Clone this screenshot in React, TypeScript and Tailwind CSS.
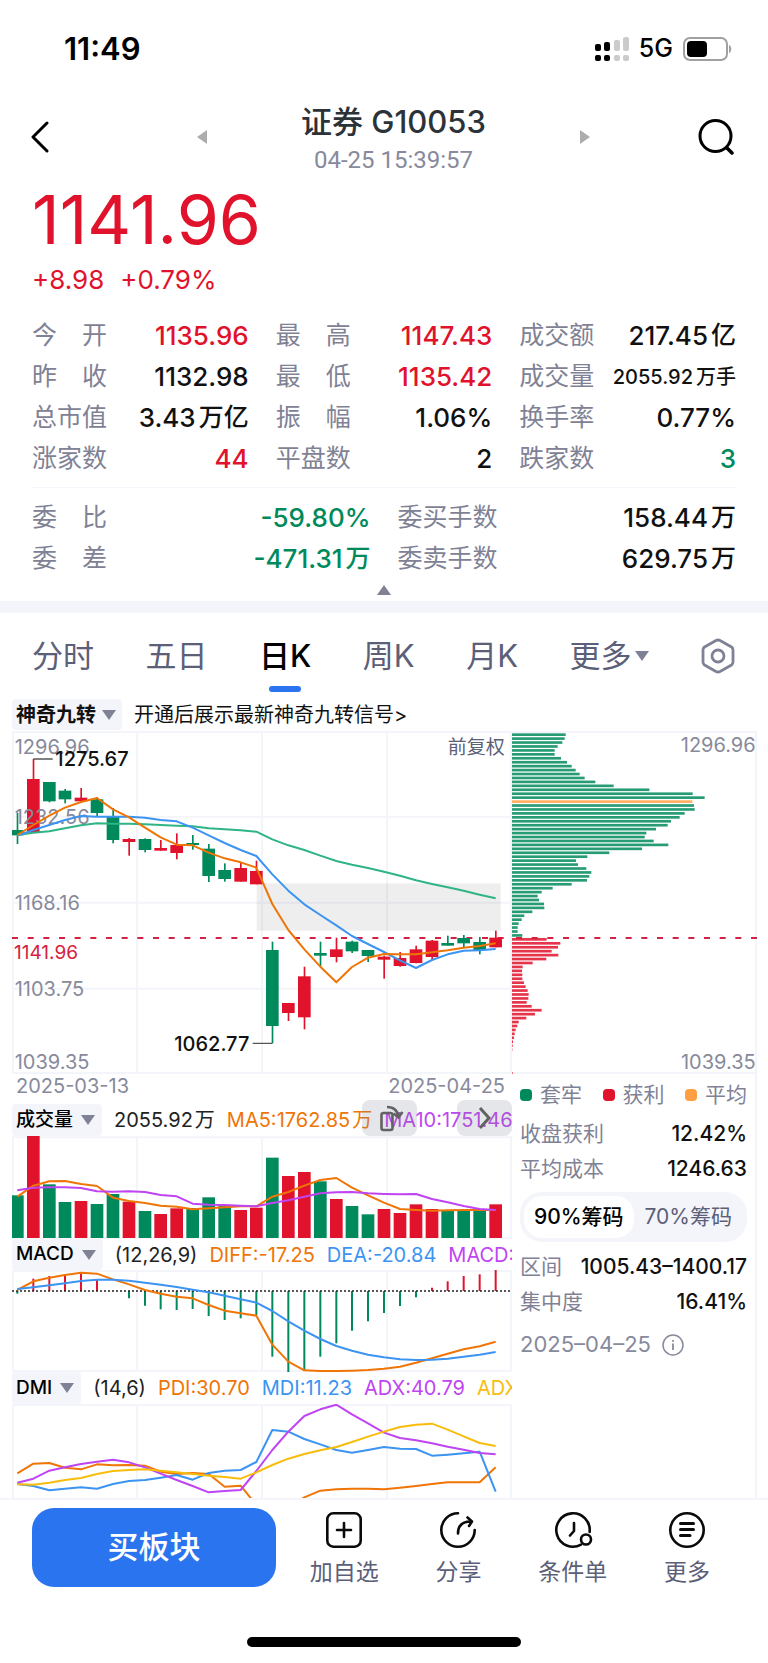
import type { ReactNode } from "react";
import { clsx } from "clsx";

const UP = "#e0122c";
const DOWN = "#008a5c";
const ORANGE = "#ef7506";
const BLUE = "#3c94f2";
const PURPLE = "#bf44f2";
const YELLOW = "#f8bd0c";
const GRID = "#f4f5fa";
const AXIS = "#878a9b";

// high, body top, body bottom, low, direction
const candles: [number, number, number, number, "u" | "d"][] = [
    [248, 300, 316, 342, "d"], [87, 147, 308, 308, "u"], [156, 156, 214, 217, "d"], [177, 182, 208, 220, "d"],
    [174, 203, 214, 216, "u"], [202, 208, 249, 258, "d"], [234, 260, 330, 340, "d"], [324, 327, 336, 377, "u"],
    [325, 327, 360, 367, "d"], [330, 354, 362, 362, "u"], [310, 345, 369, 388, "u"], [315, 339, 345, 359, "d"],
    [342, 356, 438, 456, "d"], [400, 420, 447, 455, "d"], [398, 414, 455, 455, "u"], [392, 423, 463, 463, "u"],
    [635, 660, 888, 940, "d"], [819, 819, 849, 873, "u"], [710, 739, 862, 898, "u"], [635, 669, 677, 710, "d"],
    [623, 658, 681, 697, "u"], [632, 635, 664, 669, "d"], [660, 660, 678, 696, "d"], [677, 680, 689, 746, "u"],
    [666, 684, 708, 710, "u"], [647, 658, 699, 700, "u"], [630, 632, 681, 690, "u"], [617, 639, 647, 647, "d"],
    [615, 624, 640, 651, "d"], [621, 636, 660, 673, "d"], [602, 623, 652, 652, "u"],
];

const priceMa5 = [315, 285, 257, 233, 216, 204, 238, 262, 293, 322, 344, 346, 368, 385, 397, 413, 522, 600, 658, 710, 757, 711, 683, 672, 673, 673, 667, 661, 653, 648, 640];
const priceMa10 = [317, 300, 285, 270, 258, 260, 260, 260, 263, 270, 274, 293, 316, 339, 360, 378, 433, 482, 523, 555, 586, 618, 642, 666, 691, 714, 690, 673, 662, 661, 657];
const priceMa20 = [315, 308, 304, 295, 286, 280, 281, 281, 283, 285, 287, 289, 295, 298, 301, 305, 328, 346, 360, 377, 393, 404, 414, 425, 437, 451, 462, 472, 482, 494, 505];

const volumeTops = [178, 0, 145, 198, 195, 204, 174, 197, 225, 234, 217, 216, 184, 209, 222, 215, 65, 120, 108, 136, 189, 210, 235, 219, 231, 205, 219, 225, 225, 225, 205];
const volumeMa5 = [182, 149, 136, 135, 144, 150, 185, 195, 201, 209, 212, 220, 217, 214, 211, 211, 182, 168, 149, 132, 126, 155, 178, 200, 219, 222, 224, 223, 222, 222, 222];
const volumeMa10 = [163, 155, 154, 154, 156, 166, 167, 166, 168, 177, 181, 203, 206, 207, 209, 211, 201, 193, 182, 172, 169, 168, 172, 174, 175, 174, 189, 199, 210, 219, 222];

const macdBars = [71, 26, 18, 13, 10, 30, 62, 85, 107, 118, 120, 117, 138, 150, 145, 135, 260, 306, 303, 260, 220, 182, 154, 129, 108, 82, 53, 34, 18, 13, 0];
const macdDiff = [60, 34, 23, 15, 8, 11, 28, 43, 60, 71, 80, 85, 105, 122, 130, 137, 224, 275, 301, 303, 303, 302, 300, 296, 290, 278, 265, 251, 238, 229, 215];
const macdDea = [57, 52, 46, 40, 33, 29, 29, 32, 38, 44, 51, 59, 67, 77, 88, 98, 123, 154, 182, 207, 228, 242, 254, 262, 268, 270, 269, 266, 260, 254, 246];

const dmiPdi = [208, 179, 177, 191, 196, 181, 184, 183, 185, 203, 210, 207, 210, 248, 245, 303, 350, 310, 280, 260, 256, 254, 254, 256, 251, 246, 240, 235, 235, 235, 190];
const dmiMdi = [240, 246, 259, 254, 250, 254, 240, 231, 228, 221, 213, 227, 207, 200, 198, 174, 78, 83, 105, 121, 138, 146, 138, 129, 134, 135, 155, 152, 148, 143, 263];
const dmiAdx = [236, 224, 200, 190, 180, 173, 167, 175, 190, 209, 228, 246, 265, 261, 258, 201, 138, 83, 36, 16, 2, 31, 58, 86, 102, 109, 118, 128, 137, 147, 151];
const dmiAdxr = [241, 242, 236, 228, 222, 210, 201, 198, 196, 200, 205, 210, 215, 219, 224, 205, 183, 164, 150, 139, 129, 114, 98, 83, 69, 62, 59, 77, 97, 117, 126];

const chipWidths = [
    161, 158, 151, 137, 128, 128, 147, 165, 179, 191, 203, 218, 250, 305, 412, 542, 578, 541, 546, 548, 518, 503, 477, 467, 432, 403, 398, 425,
    469, 390, 292, 226, 192, 198, 223, 238, 232, 225, 179, 122, 89, 77, 81, 96, 97, 61, 37, 29, 20, 17, 17, 31,
    104, 145, 138, 119, 139, 103, 62, 32, 30, 31, 31, 36, 41, 47, 50, 49, 44, 59, 89, 69, 43, 20, 16, 11, 8, 6, 3, 2, 1, 0, 0, 0, 0, 0, 2,
];
const AVERAGE_ROW = 17;
const FIRST_PROFIT_ROW = 52;

const stats = [
    { label: "今　开", value: "1135.96", tone: "text-[#e0122c]" },
    { label: "最　高", value: "1147.43", tone: "text-[#e0122c]" },
    { label: "成交额", value: "217.45", unit: "亿" },
    { label: "昨　收", value: "1132.98" },
    { label: "最　低", value: "1135.42", tone: "text-[#e0122c]" },
    { label: "成交量", value: "2055.92", unit: "万手", small: true },
    { label: "总市值", value: "3.43", unit: "万亿" },
    { label: "振　幅", value: "1.06%" },
    { label: "换手率", value: "0.77%" },
    { label: "涨家数", value: "44", tone: "text-[#e0122c]" },
    { label: "平盘数", value: "2" },
    { label: "跌家数", value: "3", tone: "text-[#008a5c]" },
];

const orders = [
    { label: "委　比", value: "-59.80%", tone: "text-[#008a5c]" },
    { label: "委买手数", value: "158.44", unit: "万" },
    { label: "委　差", value: "-471.31", unit: "万", tone: "text-[#008a5c]" },
    { label: "委卖手数", value: "629.75", unit: "万" },
];

const xAt = (i: number) => Math.round(16 + i * 47.83);

function Line({ points, color }: { points: number[]; color: string }) {
    return (
        <polyline
            points={points.map((y, i) => `${xAt(i)},${y}`).join(" ")}
            fill="none"
            stroke={color}
            strokeWidth="6"
            strokeLinejoin="round"
        />
    );
}

function Grid({ top, bottom, rows = [] }: { top: number; bottom: number; rows?: number[] }) {
    return (
        <g stroke={GRID} strokeWidth="6">
            {[3, 375, 750, 1125, 1497].map((x) => <path key={x} d={`M${x} ${top}V${bottom}`} />)}
            {[top, ...rows, bottom].map((y) => <path key={y} d={`M0 ${y}H1500`} />)}
        </g>
    );
}

function Triangle({ className, dir = "down" }: { className: string; dir?: "up" | "down" | "left" | "right" }) {
    const shapes = {
        up: "M7 0L14 10H0z",
        down: "M0 0H14L7 10z",
        left: "M14 0V10L0 5z",
        right: "M0 0L14 5L0 10z",
    };
    return (
        <svg viewBox="0 0 14 10" preserveAspectRatio="none" className={className} fill="currentColor" aria-hidden="true">
            <path d={shapes[dir]} />
        </svg>
    );
}

interface Stat {
    label: string;
    value: string;
    unit?: string;
    tone?: string;
    small?: boolean;
}

function StatRow({ label, value, unit, tone, small }: Stat) {
    return (
        <div className="flex h-[41px] items-center justify-between whitespace-nowrap">
            <dt className="text-[25px] text-[#7f8295]">{label}</dt>
            <dd className={clsx("flex items-center gap-[3px] font-medium", small ? "text-[20px]" : "text-[26px]", tone ?? "text-[#111]")}>
                <span>{value}</span>
                {unit && <span className={small ? "text-[20px]" : "text-[25px]"}>{unit}</span>}
            </dd>
        </div>
    );
}

function IndicatorHeader({ name, children, className }: { name: string; children: ReactNode; className: string }) {
    return (
        <div className={clsx("flex items-center overflow-hidden whitespace-nowrap", className)}>
            <button className="flex h-full shrink-0 items-center gap-2 rounded bg-[#f4f5fa] pr-[7px] pl-1 text-[19px] font-medium text-black">
                {name}
                <Triangle className="h-[10px] w-[14px] text-[#7f8295]" />
            </button>
            <div className="ml-3 flex gap-3 text-[20px]">{children}</div>
        </div>
    );
}

function PriceChart() {
    return (
        <svg viewBox="0 0 1500 1032" className="block w-full" fontSize="60" role="img" aria-label="日K">
            <Grid top={6} bottom={1029} rows={[260, 518, 776]} />
            <rect x="734" y="460" width="732" height="142" fill="#000" fillOpacity="0.065" />
            <path d="M0 624H1500" stroke="#d5213f" strokeWidth="6" strokeDasharray="18 29" />
            {candles.map(([high, top, bottom, low, dir], i) => (
                <g key={i} fill={dir === "u" ? UP : DOWN}>
                    <rect x={xAt(i) - 2} y={high} width="5" height={low - high} />
                    <rect x={xAt(i) - 19} y={top} width="38" height={bottom - top} />
                </g>
            ))}
            <g fill={AXIS}>
                <text x="8" y="71">1296.96</text>
                <text x="8" y="281">1232.56</text>
                <text x="8" y="540">1168.16</text>
                <text x="8" y="798">1103.75</text>
                <text x="8" y="1016">1039.35</text>
            </g>
            <text x="6" y="687" fill="#d5213f" fontSize="57">1141.96</text>
            <Line points={priceMa20} color="#2fb484" />
            <Line points={priceMa10} color={BLUE} />
            <Line points={priceMa5} color={ORANGE} />
            <path d="M64 87H122M722 940H781" stroke="#555" strokeWidth="4" />
            <g fill="#111" fontWeight="500">
                <text x="130" y="108">1275.67</text>
                <text x="712" y="962" textAnchor="end">1062.77</text>
            </g>
            <text x="1478" y="73" textAnchor="end" fill="#5b6078" fontSize="57">前复权</text>
        </svg>
    );
}

function VolumeChart() {
    return (
        <svg viewBox="0 0 1500 309" className="block w-full" role="img" aria-label="成交量">
            <Grid top={4} bottom={305} />
            {volumeTops.map((top, i) => (
                <rect key={i} x={xAt(i) - 19} y={top} width="38" height={306 - top} fill={candles[i][4] === "u" ? UP : DOWN} />
            ))}
            <Line points={volumeMa5} color={ORANGE} />
            <Line points={volumeMa10} color={PURPLE} />
        </svg>
    );
}

function MacdChart() {
    return (
        <svg viewBox="0 0 1500 306" className="block w-full" role="img" aria-label="MACD">
            <Grid top={3} bottom={303} />
            {macdBars.map((y, i) => (
                <path key={i} d={`M${xAt(i)} 63V${y}`} stroke={y > 63 ? DOWN : UP} strokeWidth="6" />
            ))}
            <path d="M0 63H1500" stroke="#222" strokeWidth="5" strokeDasharray="6 6" />
            <Line points={macdDiff} color={ORANGE} />
            <Line points={macdDea} color={BLUE} />
        </svg>
    );
}

function DmiChart() {
    return (
        <svg viewBox="0 0 1500 282" className="block w-full" role="img" aria-label="DMI">
            <Grid top={3} bottom={320} />
            <Line points={dmiPdi} color={ORANGE} />
            <Line points={dmiMdi} color={BLUE} />
            <Line points={dmiAdx} color={PURPLE} />
            <Line points={dmiAdxr} color={YELLOW} />
        </svg>
    );
}

function ChipChart() {
    return (
        <svg viewBox="0 0 735 1032" className="block w-full" fontSize="60" role="img" aria-label="筹码分布">
            <path d="M0 6H732V1029H0" fill="none" stroke={GRID} strokeWidth="6" />
            {chipWidths.map((w, i) => (
                <rect
                    key={i}
                    x="0"
                    y={10 + i * 11.81}
                    width={w}
                    height="8"
                    opacity="0.85"
                    fill={i === AVERAGE_ROW ? "#ff9f43" : i < FIRST_PROFIT_ROW ? DOWN : UP}
                />
            ))}
            <path d="M12 624H735" stroke="#d5213f" strokeWidth="6" strokeDasharray="18 29" />
            <g fill={AXIS} textAnchor="end">
                <text x="731" y="67">1296.96</text>
                <text x="731" y="1016">1039.35</text>
            </g>
        </svg>
    );
}

function ChipRow({ label, value }: { label: string; value: string }) {
    return (
        <div className="flex h-[35px] items-center justify-between whitespace-nowrap text-[21px]">
            <dt className="text-[#7f8295]">{label}</dt>
            <dd className="font-medium text-[#111]">{value}</dd>
        </div>
    );
}

function ChipPanel() {
    return (
        <div className="flex-1 border-r-2 border-[#f4f5fa] pr-2 pl-2">
            <ul className="flex h-[42px] items-center justify-between text-[21px] text-[#7f8295]">
                <li className="flex items-center gap-2"><i className="size-3 rounded bg-[#008a5c]" />套牢</li>
                <li className="flex items-center gap-2"><i className="size-3 rounded bg-[#e0122c]" />获利</li>
                <li className="flex items-center gap-2"><i className="size-3 rounded bg-[#ff9f43]" />平均</li>
            </ul>
            <dl>
                <ChipRow label="收盘获利" value="12.42%" />
                <ChipRow label="平均成本" value="1246.63" />
            </dl>
            <div className="mt-[6px] flex h-[50px] rounded-[22px] bg-[#f4f5fa] p-1 text-[21px] whitespace-nowrap">
                <button className="flex-1 rounded-[18px] bg-white font-medium text-black" aria-pressed="true">90%筹码</button>
                <button className="flex-1 text-[#5b6078]" aria-pressed="false">70%筹码</button>
            </div>
            <dl className="mt-[7px]">
                <ChipRow label="区间" value="1005.43–1400.17" />
                <ChipRow label="集中度" value="16.41%" />
            </dl>
            <div className="mt-2 flex h-[35px] items-center gap-[11px] text-[22px] text-[#878a9b]">
                <time>2025–04–25</time>
                <button aria-label="说明">
                    <svg viewBox="0 0 22 22" className="size-[22px]" fill="none" stroke="currentColor" strokeWidth="1.5">
                        <circle cx="11" cy="11" r="10" />
                        <path d="M11 9.5V16M11 6V7.8" strokeWidth="1.8" />
                    </svg>
                </button>
            </div>
        </div>
    );
}

function StatusBar() {
    return (
        <div className="flex h-[98px] items-center justify-between pr-9 pl-16 text-black">
            <span className="text-[31px] font-semibold">11:49</span>
            <div className="flex items-center gap-[10px]">
                <svg viewBox="0 0 34 24" className="h-6 w-[34px]" aria-hidden="true">
                    <rect x="0" y="7" width="6" height="7" rx="2" />
                    <rect x="9" y="5" width="6" height="9" rx="2" />
                    <rect x="0" y="18" width="6" height="6" rx="2" />
                    <rect x="9" y="18" width="6" height="6" rx="2" />
                    <g fill="#cbcbcb">
                        <rect x="19" y="3" width="6" height="11" rx="2" />
                        <rect x="28" y="0" width="6" height="14" rx="2" />
                        <rect x="19" y="18" width="6" height="6" rx="2" />
                        <rect x="28" y="18" width="6" height="6" rx="2" />
                    </g>
                </svg>
                <span className="text-[25px] font-medium">5G</span>
                <svg viewBox="0 0 49 24" className="h-6 w-[49px]" aria-hidden="true">
                    <rect x="1" y="1" width="43" height="22" rx="6" fill="none" stroke="#a0a0a0" strokeWidth="2" />
                    <rect x="4" y="4" width="20" height="16" rx="4" />
                    <path d="M46 8c3 1 3 7 0 8z" fill="#a0a0a0" />
                </svg>
            </div>
        </div>
    );
}

function NavIcon({ children }: { children: ReactNode }) {
    return (
        <svg viewBox="0 0 36 36" className="size-9 overflow-visible" fill="none" stroke="#0a0a0a" strokeWidth="2.6" strokeLinecap="round" strokeLinejoin="round" aria-hidden="true">
            {children}
        </svg>
    );
}

const actions = [
    {
        label: "加自选",
        icon: <><rect x="1.3" y="1.3" width="33.4" height="33.4" rx="6" /><path d="M18 11V25M11 18H25" /></>,
    },
    {
        label: "分享",
        icon: <><path d="M18 1.3A16.7 16.7 0 1 0 34.7 18" /><path d="M18 21.5C18 14 22 9.5 31 9.5M27.5 5.5L32 9.5L29 14" /></>,
    },
    {
        label: "条件单",
        icon: <><path d="M26 32.7A16.7 16.7 0 1 1 34.6 20" /><circle cx="31" cy="27.5" r="5" /><path d="M19 11V19L15 23.5" /></>,
    },
    {
        label: "更多",
        icon: <><circle cx="18" cy="18" r="16.7" /><path d="M11.5 11.5H24.5M11.5 17.5H24.5M11.5 23.5H21" strokeWidth="3" /></>,
    },
];

export default function App() {
    const tab = "flex h-full items-center text-[31px] text-[#5b6078]";

    return (
        <div className="flex min-h-screen w-full flex-col overflow-hidden bg-white font-['Inter','Noto_Sans_CJK_SC',sans-serif]">
            <StatusBar />

            <header className="flex h-[78px] items-center pr-[34px] pl-[31px]">
                <button aria-label="返回">
                    <svg viewBox="0 0 18 32" className="h-8 w-[18px]" fill="none" stroke="#000" strokeWidth="3" strokeLinecap="round" strokeLinejoin="round">
                        <path d="M16 2L2 16L16 30" />
                    </svg>
                </button>
                <div className="mr-[108px] ml-[148px] flex flex-1 items-center justify-between">
                    <button aria-label="上一个"><Triangle dir="left" className="h-[14px] w-[10px] text-[#adadad]" /></button>
                    <div className="pt-[6px] text-center">
                        <h1 className="text-[31px] leading-[40px] font-medium text-[#2b3238]">证券 G10053</h1>
                        <p className="font-['Roboto',sans-serif] text-[24px] leading-[36px] text-[#878a9b]">04-25 15:39:57</p>
                    </div>
                    <button aria-label="下一个"><Triangle dir="right" className="h-[14px] w-[10px] text-[#adadad]" /></button>
                </div>
                <button aria-label="搜索">
                    <svg viewBox="0 0 36 36" className="size-9" fill="none" stroke="#000" strokeWidth="3" strokeLinecap="round">
                        <circle cx="17.5" cy="17" r="15.5" />
                        <path d="M29 29L34 34" strokeWidth="3.5" />
                    </svg>
                </button>
            </header>

            <section className="px-8">
                <p className="h-[86px] text-[68px] leading-[86px] text-[#e0122c]">1141.96</p>
                <p className="flex gap-4 pb-[17px] text-[26px] leading-[36px] text-[#e0122c]">
                    <span>+8.98</span>
                    <span>+0.79%</span>
                </p>
                <dl className="grid grid-cols-3 gap-x-[27px] border-b border-[#f4f5fa] pb-2">
                    {stats.map((s) => <StatRow key={s.label} {...s} />)}
                </dl>
                <dl className="grid grid-cols-2 gap-x-[27px] pt-[9px]">
                    {orders.map((s) => <StatRow key={s.label} {...s} />)}
                </dl>
                <button className="mx-auto flex h-[22px] items-center" aria-label="收起">
                    <Triangle dir="up" className="h-[10px] w-[14px] text-[#7f8295]" />
                </button>
            </section>

            <div className="h-3 shrink-0 bg-[#f4f5fa]" />

            <nav className="flex h-[86px] items-center justify-between pr-[33px] pl-8">
                <button className={tab}>分时</button>
                <button className={tab}>五日</button>
                <button className="relative flex h-full items-center text-[31px] font-medium text-black" aria-current="page">
                    日K
                    <span className="absolute bottom-[7px] left-1/2 h-[6px] w-8 -translate-x-1/2 rounded-full bg-[#2b74f0]" />
                </button>
                <button className={tab}>周K</button>
                <button className={tab}>月K</button>
                <button className={clsx(tab, "gap-1")}>
                    更多
                    <Triangle className="h-[10px] w-[14px] text-[#7f8295]" />
                </button>
                <button aria-label="设置">
                    <svg viewBox="0 0 34 36" className="h-9 w-[34px]" fill="none" stroke="#7f8295" strokeWidth="2.8" strokeLinejoin="round">
                        <path d="M15 2.5Q17 1.5 19 2.5L30.5 9Q32 10 32 12V24Q32 26 30.5 27L19 33.5Q17 34.5 15 33.5L3.5 27Q2 26 2 24V12Q2 10 3.5 9Z" />
                        <circle cx="17" cy="18" r="6" />
                    </svg>
                </button>
            </nav>

            <main className="pr-[11px] pl-3">
                <div className="flex h-[31px] items-center gap-3 text-[20px] whitespace-nowrap">
                    <button className="flex h-full items-center gap-[6px] rounded bg-[#f4f5fa] pr-[6px] pl-1 font-bold text-[#111]">
                        神奇九转
                        <Triangle className="h-[10px] w-[14px] text-[#7f8295]" />
                    </button>
                    <a href="#signal" className="text-[#111]">开通后展示最新神奇九转信号&gt;</a>
                </div>

                <div className="grid grid-cols-[500fr_245fr]">
                    <div className="min-w-0">
                        <PriceChart />
                        <div className="flex h-[30px] justify-between px-1 pr-[7px] text-[20px] leading-[25px] text-[#878a9b]">
                            <time>2025-03-13</time>
                            <time>2025-04-25</time>
                        </div>

                        <div className="relative">
                            <IndicatorHeader name="成交量" className="h-8">
                                <span className="flex gap-[2px] text-[#222]">2055.92<span>万</span></span>
                                <span className="flex gap-[2px] text-[#ef7506]">MA5:1762.85<span>万</span></span>
                                <span className="flex gap-[2px] text-[#bf44f2]">MA10:1751.46<span>万</span></span>
                            </IndicatorHeader>
                            <button aria-label="横屏" className="absolute -top-1 right-[95px] flex h-9 w-[55px] justify-center rounded-lg bg-[#7f8295]/20">
                                <svg viewBox="0 0 55 36" className="h-9 w-[55px]" fill="none" stroke="#626262" strokeWidth="2.6">
                                    <rect x="19.5" y="13" width="11" height="17" rx="2" />
                                    <path d="M25 7Q35 7 36.5 17M31.5 13.5L36.5 17.5L40.5 12" />
                                </svg>
                            </button>
                            <button aria-label="下一指标" className="absolute -top-1 right-0 flex h-9 w-[55px] justify-center rounded-lg bg-[#7f8295]/20">
                                <svg viewBox="0 0 55 36" className="h-9 w-[55px]" fill="none" stroke="#626262" strokeWidth="3">
                                    <path d="M23 8L32 18L23 28" />
                                </svg>
                            </button>
                        </div>
                        <VolumeChart />

                        <IndicatorHeader name="MACD" className="h-[31px]">
                            <span className="text-[#222]">(12,26,9)</span>
                            <span className="text-[#ef7506]">DIFF:-17.25</span>
                            <span className="text-[#3c94f2]">DEA:-20.84</span>
                            <span className="text-[#bf44f2]">MACD:7.17</span>
                        </IndicatorHeader>
                        <MacdChart />

                        <IndicatorHeader name="DMI" className="h-8">
                            <span className="text-[#222]">(14,6)</span>
                            <span className="text-[#ef7506]">PDI:30.70</span>
                            <span className="text-[#3c94f2]">MDI:11.23</span>
                            <span className="text-[#bf44f2]">ADX:40.79</span>
                            <span className="text-[#f8bd0c]">ADXR:43.10</span>
                        </IndicatorHeader>
                        <DmiChart />
                    </div>

                    <div className="flex min-w-0 flex-col">
                        <ChipChart />
                        <ChipPanel />
                    </div>
                </div>
            </main>

            <footer className="border-t-2 border-[#f4f5fa]">
                <div className="flex items-start pt-2 pr-6 pl-8">
                    <button className="h-[79px] w-[244px] rounded-[22px] bg-[#2b74f0] text-[31px] font-medium text-white">买板块</button>
                    <div className="ml-[11px] grid flex-1 grid-cols-4 pt-1">
                        {actions.map((a) => (
                            <button key={a.label} className="flex flex-col items-center text-[23px] leading-[32px] text-[#5b6078]">
                                <NavIcon>{a.icon}</NavIcon>
                                <span className="pt-2">{a.label}</span>
                            </button>
                        ))}
                    </div>
                </div>
                <div className="mx-auto mt-[49px] mb-4 h-[10px] w-[274px] rounded-full bg-black" />
            </footer>
        </div>
    );
}
